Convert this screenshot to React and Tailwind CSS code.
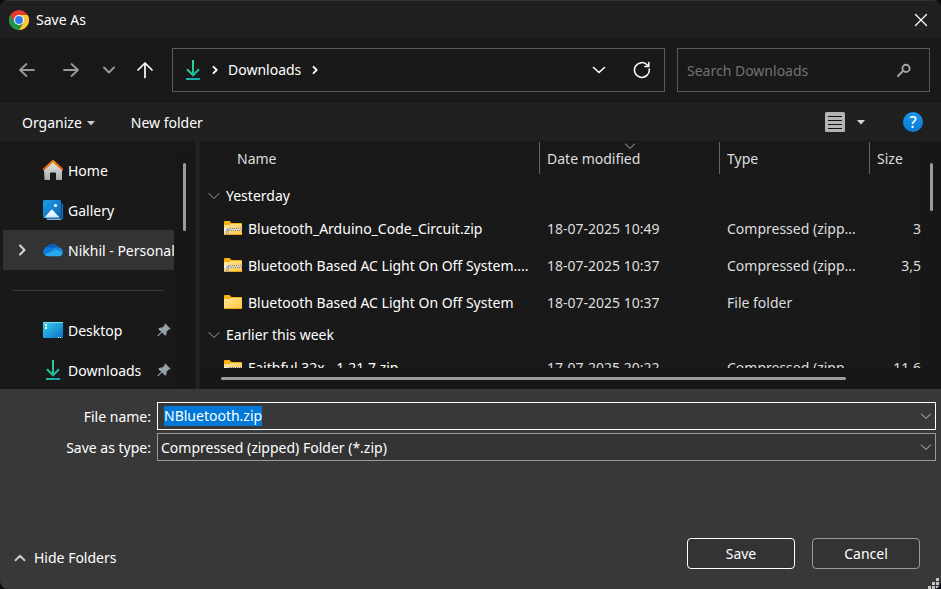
import { useEffect, useId, useRef } from "react";

function Stroke({ d, className, width = 1.5, box = 16, size = "size-4" }) {
  return (
    <svg viewBox={`0 0 ${box} ${box}`} className={`${size} shrink-0 ${className ?? ""}`} fill="none" stroke="currentColor" strokeWidth={width} strokeLinecap="round" strokeLinejoin="round" aria-hidden="true">
      <path d={d} />
    </svg>
  );
}

const CHEVRON_DOWN = "M3 5.5 8 10.5 13 5.5";
const THIN_CHEVRON_DOWN = "M3.5 6 8 10.5 12.5 6";

function ChromeLogo() {
  return (
    <svg viewBox="0 0 48 48" className="size-5 shrink-0" aria-hidden="true">
      <circle cx="24" cy="24" r="24" fill="#e33b2e" />
      <path d="M24 12H44.800A24 24 0 0 1 24 48L34.400 30z" fill="#fcc934" />
      <path d="M24 48A24 24 0 0 1 3.200 12L13.600 30 24 36 34.400 30z" fill="#1e9446" />
      <circle cx="24" cy="24" r="12" fill="#fff" />
      <circle cx="24" cy="24" r="9.500" fill="#2a7af0" />
    </svg>
  );
}

function DownloadIcon() {
  const id = useId();
  return (
    <svg viewBox="0 0 20 20" className="size-5 shrink-0" fill="none" aria-hidden="true">
      <defs>
        <linearGradient id={id} gradientUnits="userSpaceOnUse" x1="4" y1="1" x2="16" y2="19">
          <stop offset="0" stopColor="#3ddc84" />
          <stop offset="1" stopColor="#12a5a8" />
        </linearGradient>
      </defs>
      <path d="M10 0V15M4 9.300 10 15.300 16 9.300M3 19H17" stroke={`url(#${id})`} strokeWidth="2" />
    </svg>
  );
}

function HomeIcon() {
  return (
    <svg viewBox="0 0 20 20" className="size-5 shrink-0" aria-hidden="true">
      <defs>
        <linearGradient id="wall" x1="0" y1="0" x2="0" y2="1">
          <stop offset="0" stopColor="#e6e6e6" />
          <stop offset="1" stopColor="#a9a9a9" />
        </linearGradient>
        <linearGradient id="roof" x1="0" y1="0" x2="0" y2="1">
          <stop offset="0" stopColor="#f59b1c" />
          <stop offset="1" stopColor="#d9480f" />
        </linearGradient>
      </defs>
      <path d="M1 9 10 1.500 19 9V20H13V13.500a1 1 0 0 0-1-1H8a1 1 0 0 0-1 1V20H1.500z" fill="url(#wall)" />
      <path d="M9 .5a1.500 1.500 0 0 1 2 0L20 8.500V11L10 2.800 0 11V8.500z" fill="url(#roof)" />
    </svg>
  );
}

function GalleryIcon() {
  return (
    <svg viewBox="0 0 20 20" className="size-5 shrink-0" aria-hidden="true">
      <defs>
        <linearGradient id="sky" x1="0" y1="0" x2="1" y2="1">
          <stop offset="0" stopColor="#1e9be6" />
          <stop offset="1" stopColor="#0a66b8" />
        </linearGradient>
        <linearGradient id="peak" x1="0" y1="0" x2="0" y2="1">
          <stop offset="0" stopColor="#ffffff" />
          <stop offset="1" stopColor="#cfe8fb" />
        </linearGradient>
      </defs>
      <path d="M18.500 3.500h.5a1 1 0 0 1 1 1V18a2 2 0 0 1-2 2H4.500a1.500 1.500 0 0 1-1.300-1H17a1.500 1.500 0 0 0 1.500-1.500z" fill="#1672c4" />
      <path d="M3.500 18.600H18L17.500 20H5a1.600 1.600 0 0 1-1.500-1.400z" fill="#7db7ea" />
      <rect width="18" height="18" rx="1.500" fill="url(#sky)" />
      <path d="M1.500 17.500 7.800 10.200a1.400 1.400 0 0 1 2.100 0L16.500 17.500z" fill="url(#peak)" />
      <circle cx="12.500" cy="5.500" r="1.600" fill="#fff" />
    </svg>
  );
}

function CloudIcon() {
  return (
    <svg viewBox="0 0 20 14" className="h-3.5 w-5 shrink-0" aria-hidden="true">
      <path d="M4.500 12.500A4.300 4.300 0 0 1 3.800 4 6.800 6.800 0 0 1 15.800 4.600 L10 9z" fill="#0a62b8" />
      <path d="M4.600 13A4.300 4.300 0 0 1 4.500 4.300C6 3.900 7.500 4.500 8.800 5.400L13 8 8 13z" fill="#0f78d4" />
      <path d="M9 5.500C11 4.500 12.500 4.300 15.500 4.600 A4.300 4.300 0 0 1 19.800 9.500L13 9z" fill="#1687dc" />
      <path d="M1.600 11.500 11.500 6.900a3 3 0 0 1 2.400.1L19.700 9.600A4 4 0 0 1 15.800 13.300H4.600A4.500 4.500 0 0 1 1.600 11.500z" fill="#29a7ee" />
    </svg>
  );
}

function DesktopIcon() {
  return (
    <svg viewBox="0 0 20 16" className="h-4 w-5 shrink-0" aria-hidden="true">
      <defs>
        <linearGradient id="screen" x1="0" y1="0" x2="1" y2="1">
          <stop offset="0" stopColor="#37d3ea" />
          <stop offset="1" stopColor="#0c6fc9" />
        </linearGradient>
      </defs>
      <rect width="20" height="16" rx="1" fill="url(#screen)" />
      <path d="M0 1a1 1 0 0 1 1-1H19a1 1 0 0 1 1 1z" fill="#6fe3f2" />
      <path d="M2 2h2v2H2zM2 5h2v2H2zM15 15h1v1H15zM17 15h1v1H17z" fill="#fff" />
    </svg>
  );
}

function PinIcon() {
  return (
    <svg viewBox="0 0 14 14" className="size-3.5 shrink-0" aria-hidden="true">
      <path d="M8.300.5 13.500 5.700 12.600 6.500 11.700 6.500 9.600 8.700 9.400 11.500 8.200 12.700 5 9.600 1.200 13.300 .4 13.300 .4 12.600 4.200 8.800 1.200 5.900 2.400 4.700 5.200 4.500 7.500 2.400 7.500 1.200z" fill="#94a0a8" />
    </svg>
  );
}

function FolderIcon({ zip }) {
  return (
    <svg viewBox="0 0 18 14" className="h-3.5 w-[18px] shrink-0" aria-hidden="true">
      <defs>
        <linearGradient id="folder" x1="0" y1="0" x2="1" y2="1">
          <stop offset="0" stopColor="#ffe79a" />
          <stop offset="1" stopColor="#fdc83c" />
        </linearGradient>
      </defs>
      <path d="M0 1A1 1 0 0 1 1 0H5.500L7.500 2H17a1 1 0 0 1 1 1V6H0z" fill="#fbb012" />
      <path d="M0 4H5.500L7.500 3H18V14H0z" fill="url(#folder)" />
      <path d="M0 13H18V14H0z" fill="#e8a71c" />
      {zip && (
        <>
          <path d="M0 7H18V10H0z" fill="#e4ddc2" />
          <path d="M6 7.500H18M7 9.500H18" stroke="#77746a" strokeWidth="1" strokeDasharray="1 1" />
          <path d="M0 7H3V10H0z" fill="#f0f0f0" />
          <path d="M2 9.500A2 2 0 0 1 4 7.500H6V9.500H5V14H2z" fill="#a8a8a8" />
          <path d="M3 10H4V13H3z" fill="#d0d0d0" />
        </>
      )}
    </svg>
  );
}

function SidebarItem({ icon, label, pinned, selected }) {
  return (
    <li>
      <button type="button" className={`flex h-10 w-full items-center overflow-hidden text-left ${selected ? "bg-[#333333]" : ""}`}>
        <span className="flex w-10 shrink-0 pl-[11px]">
          {selected && <Stroke d="M6 3.500 10.500 8 6 12.500" width={2} className="text-[#d8d8d8]" />}
        </span>
        {icon}
        <span className="ml-[5px] flex-1 pt-0.5 whitespace-nowrap">{label}</span>
        {pinned && <span className="mr-[3px]"><PinIcon /></span>}
      </button>
    </li>
  );
}

function ColumnHead({ label, sorted }) {
  return (
    <th scope="col" className="p-0 pt-px align-top font-normal">
      <div className="relative flex h-8 items-center border-l border-[#636363] pt-0.5 pl-[7px]">
        {sorted && <Stroke d={THIN_CHEVRON_DOWN} width={1} className="absolute -top-1 left-[82px] text-[#b0b0b0]" />}
        {label}
      </div>
    </th>
  );
}

function GroupRow({ label }) {
  return (
    <tr className="h-7 text-white">
      <th scope="rowgroup" colSpan={4} className="p-0 font-normal">
        <button type="button" className="flex items-center gap-1 pl-1.5">
          <Stroke d={CHEVRON_DOWN} width={1} className="text-[#a0a0a0]" />
          {label}
        </button>
      </th>
    </tr>
  );
}

function FileRow({ name, date, type, size, zip }) {
  return (
    <tr className="h-[37px]">
      <td className="p-0">
        <div className="flex items-center gap-1.5 pl-6 text-white">
          <span className="pb-0.5"><FolderIcon zip={zip} /></span>
          <span className="whitespace-nowrap">{name}</span>
        </div>
      </td>
      <td className="p-0 pl-2 whitespace-nowrap">{date}</td>
      <td className="p-0 pl-2 whitespace-nowrap">{type}</td>
      <td className="p-0 text-right whitespace-nowrap">{size}</td>
    </tr>
  );
}

export default function App() {
  const nameRef = useRef(null);

  useEffect(() => {
    nameRef.current.focus();
    nameRef.current.select();
  }, []);

  return (
    <div className="h-screen bg-[#0a0a12]">
      <main className="flex h-full flex-col overflow-hidden rounded-lg bg-[#191919] font-['Noto_Sans','Open_Sans',sans-serif] text-sm leading-5 text-white">
        <header className="flex h-[38px] shrink-0 items-center gap-[7px] border-t border-[#333333] bg-[#202020] pr-3 pl-[9px]">
          <ChromeLogo />
          <h1 className="flex-1">Save As</h1>
          <button type="button" aria-label="Close">
            <Stroke d="M2.500 2.500 13.500 13.500M13.500 2.500 2.500 13.500" width={1.3} />
          </button>
        </header>

        <nav className="flex h-[65px] shrink-0 items-center gap-3 pr-[11px] pb-0.5 pl-[18px]">
          <div className="flex items-center text-[#9a9a9a]">
            <button type="button" aria-label="Back" className="mr-[26px]">
              <Stroke box={18} size="size-[18px]" width={1.8} d="M16 9H2M8.500 3 2 9 8.500 15" />
            </button>
            <button type="button" aria-label="Forward" className="mr-[21px]">
              <Stroke box={18} size="size-[18px]" width={1.8} d="M2 9H16M9.500 3 16 9 9.500 15" />
            </button>
            <button type="button" aria-label="Recent locations" className="mr-[19px]">
              <Stroke d={CHEVRON_DOWN} width={1.8} />
            </button>
            <button type="button" aria-label="Up" className="mr-1.5 text-white">
              <Stroke box={18} size="size-[18px]" width={1.7} d="M9 16.500V2M2 9 9 2 16 9" />
            </button>
          </div>
          <div className="flex h-11 flex-1 items-center border border-[#5a5a5a] pr-[13px] pl-2.5">
            <DownloadIcon />
            <Stroke d="M6.500 4.800 9.700 8 6.500 11.200" width={1.8} className="ml-1" />
            <button type="button" className="ml-[5px]">Downloads</button>
            <Stroke d="M6.500 4.800 9.700 8 6.500 11.200" width={1.8} className="ml-1.5" />
            <span className="flex-1" />
            <button type="button" aria-label="Previous locations">
              <Stroke d="M2.500 5.500 8 10.500 13.500 5.500" width={1.6} />
            </button>
            <button type="button" aria-label="Refresh" className="ml-[26px]">
              <Stroke box={18} size="size-[18px]" d="M16.200 8A7.400 7.400 0 1 1 14.500 4.200L15.800 5.500M15.800 1.500V5.500H11.800" />
            </button>
          </div>
          <div className="flex h-11 w-[253px] items-center border border-[#5a5a5a] pr-[17px] pl-[9px]">
            <input type="text" aria-label="Search Downloads" placeholder="Search Downloads" className="min-w-0 flex-1 bg-transparent pt-0.5 outline-none placeholder:text-[#737373]" />
            <Stroke d="M2 14 7 9M10 2.800a3.600 3.600 0 1 1 0 7.200 3.600 3.600 0 0 1 0-7.200z" width={1.9} className="text-[#a6a6a6]" />
          </div>
        </nav>

        <div className="flex h-[38px] shrink-0 items-center bg-[#202020] pr-[18px] pl-[22px]">
          <button type="button" className="flex items-center gap-[5px] pt-0.5">
            Organize
            <svg viewBox="0 0 8 5" className="h-[5px] w-2" aria-hidden="true"><path d="M0 0H8L4 4.500z" fill="#c8c8c8" /></svg>
          </button>
          <button type="button" className="ml-9 pt-0.5">New folder</button>
          <span className="flex-1" />
          <button type="button" aria-label="Change view">
            <svg viewBox="0 0 20 20" className="size-5" aria-hidden="true">
              <rect width="20" height="20" rx="1.500" fill="#b4b4b4" />
              <path d="M3 4.500H17M3 8.500H17M3 12.500H17M3 16.500H17" stroke="#111" strokeWidth="1" />
            </svg>
          </button>
          <button type="button" aria-label="More view options" className="ml-3">
            <svg viewBox="0 0 8 5" className="h-[5px] w-2" aria-hidden="true"><path d="M0 0H8L4 4.500z" fill="#d8d8d8" /></svg>
          </button>
          <button type="button" aria-label="Help" className="ml-[38px] flex size-5 items-center justify-center rounded-full bg-linear-to-b from-[#1a96e8] to-[#0a7ad6] text-base font-medium">
            ?
          </button>
        </div>

        <div className="flex min-h-0 flex-1">
          <aside className="flex w-[196px] shrink-0 overflow-hidden pt-[9px] pl-[3px]">
            <div className="min-w-0 flex-1">
              <ul>
                <SidebarItem icon={<HomeIcon />} label="Home" />
                <SidebarItem icon={<GalleryIcon />} label="Gallery" />
                <SidebarItem icon={<CloudIcon />} label="Nikhil - Personal" selected />
              </ul>
              <hr className="mx-2.5 mt-5 mb-[19px] border-[#3a3a3a]" />
              <ul>
                <SidebarItem icon={<DesktopIcon />} label="Desktop" pinned />
                <SidebarItem icon={<DownloadIcon />} label="Downloads" pinned />
              </ul>
            </div>
            <div className="w-[22px] shrink-0 bg-[#171717] pt-[13px] pl-[9px]">
              <div className="h-[68px] w-[3px] rounded-full bg-[#9a9a9a]" />
            </div>
          </aside>
          <div className="w-1 shrink-0 border-l border-[#2c2c2c] bg-[#202020]" />
          <section className="flex min-w-0 flex-1">
            <div className="flex min-w-0 flex-1 flex-col">
              <div className="min-h-0 flex-1 overflow-hidden">
                <table className="w-full table-fixed border-collapse text-left text-[#dedede]">
                  <colgroup>
                    <col />
                    <col className="w-[180px]" />
                    <col className="w-[150px]" />
                    <col className="w-[52px]" />
                  </colgroup>
                  <thead>
                    <tr className="h-[41px]">
                      <th scope="col" className="p-0 pt-px align-top font-normal">
                        <div className="flex h-8 items-center pt-0.5 pl-[37px]">Name</div>
                      </th>
                      <ColumnHead label="Date modified" sorted />
                      <ColumnHead label="Type" />
                      <ColumnHead label="Size" />
                    </tr>
                  </thead>
                  <tbody>
                    <GroupRow label="Yesterday" />
                    <FileRow zip name="Bluetooth_Arduino_Code_Circuit.zip" date="18-07-2025 10:49" type="Compressed (zipp..." size="3" />
                    <FileRow zip name="Bluetooth Based AC Light On Off System...." date="18-07-2025 10:37" type="Compressed (zipp..." size="3,5" />
                    <FileRow name="Bluetooth Based AC Light On Off System" date="18-07-2025 10:37" type="File folder" size="" />
                  </tbody>
                  <tbody>
                    <GroupRow label="Earlier this week" />
                    <FileRow zip name="Faithful 32x - 1.21.7.zip" date="17-07-2025 20:22" type="Compressed (zipp..." size="11,6" />
                  </tbody>
                </table>
              </div>
              <div className="h-[21px] shrink-0 bg-[#171717] pt-[9px] pr-[75px] pl-[21px]">
                <div className="h-[3px] rounded-full bg-[#9a9a9a]" />
              </div>
            </div>
            <div className="w-5 shrink-0 bg-[#171717] pt-[22px] pl-[9px]">
              <div className="h-12 w-[3px] rounded-full bg-[#9a9a9a]" />
            </div>
          </section>
        </div>

        <footer className="shrink-0 bg-[#383838]">
          <div className="grid grid-cols-[151px_1fr] items-center gap-x-1.5 gap-y-[3px] pt-[13px] pr-[5px]">
            <label htmlFor="file-name" className="pt-0.5 text-right">File name:</label>
            <div className="flex h-7 items-center border border-white pr-px pl-1.5">
              <input ref={nameRef} id="file-name" type="text" defaultValue="NBluetooth.zip" className="min-w-0 flex-1 bg-transparent outline-none selection:bg-[#0078d7] selection:text-white" />
              <button type="button" aria-label="Show file names">
                <Stroke d={THIN_CHEVRON_DOWN} width={1} className="text-[#c8c8c8]" />
              </button>
            </div>
            <label htmlFor="file-type" className="pt-0.5 text-right">Save as type:</label>
            <div className="grid h-7 items-center border border-[#9b9b9b] bg-[#333333] pr-px pl-[3px]">
              <select id="file-type" className="col-start-1 row-start-1 w-full appearance-none bg-transparent pt-0.5 outline-none">
                <option>Compressed (zipped) Folder (*.zip)</option>
              </select>
              <span className="pointer-events-none col-start-1 row-start-1 justify-self-end">
                <Stroke d={THIN_CHEVRON_DOWN} width={1} className="text-[#c8c8c8]" />
              </span>
            </div>
          </div>
          <div className="flex items-center pt-[77px] pl-3">
            <button type="button" className="mt-2 flex items-center gap-1.5">
              <Stroke d="M3.500 10.300 8 5.800 12.500 10.300" width={2} className="text-[#c8c8c8]" />
              Hide Folders
            </button>
            <span className="flex-1" />
            <div className="flex gap-[17px] pr-[21px]">
              <button type="button" className="h-[31px] w-[108px] rounded border border-white bg-[#333333]">Save</button>
              <button type="button" className="h-[31px] w-[108px] rounded border border-[#9b9b9b] bg-[#333333]">Cancel</button>
            </div>
          </div>
          <div className="flex h-5 items-end justify-end pr-0.5">
            <svg viewBox="0 0 11 11" className="size-[11px]" fill="#c4c4c4" aria-hidden="true">
              <path d="M8 0h3v3H8zM4 4h3v3H4zM8 4h3v3H8zM0 8h3v3H0zM4 8h3v3H4zM8 8h3v3H8z" />
            </svg>
          </div>
        </footer>
      </main>
    </div>
  );
}
